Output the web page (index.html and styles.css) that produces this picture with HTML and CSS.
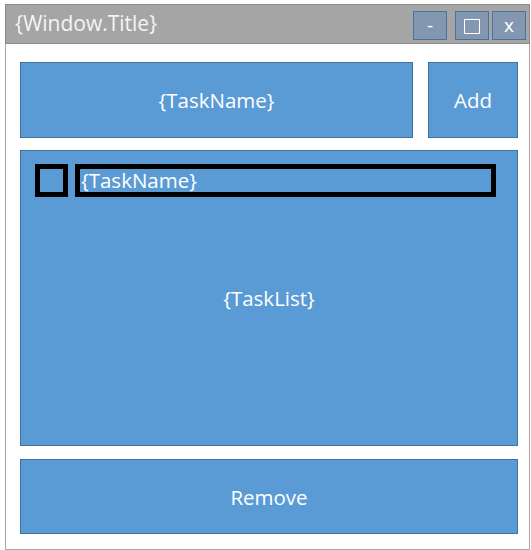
FILE: index.html
```html
<!DOCTYPE html>
<html>
<head>
<meta charset="utf-8">
<link rel="stylesheet" href="styles.css">
</head>
<body>
<div class="window">
  <div class="titlebar">
    <span class="title">{Window.Title}</span>
    <div class="controls">
      <div class="ctl ctl-min">-</div>
      <div class="ctl ctl-max"><span class="maxbox"></span></div>
      <div class="ctl ctl-close">x</div>
    </div>
  </div>
  <div class="content">
    <div class="toprow">
      <div class="box taskname">{TaskName}</div>
      <div class="box add">Add</div>
    </div>
    <div class="box tasklist">
      <div class="item">
        <div class="check"></div>
        <div class="itemtext">{TaskName}</div>
      </div>
      <div class="listlabel">{TaskList}</div>
    </div>
    <div class="box remove">Remove</div>
  </div>
</div>
</body>
</html>
```
FILE: styles.css
```css
* { box-sizing: border-box; }
html, body { margin: 0; padding: 0; background: #ffffff; }
body {
  font-family: "Open Sans", "Noto Sans", sans-serif;
  color: #ffffff;
}
.window {
  margin: 4px 0 0 5px;
  width: 525px;
  height: 546px;
  display: flex;
  flex-direction: column;
}
.titlebar {
  height: 40px;
  background: #a5a5a5;
  border: 1px solid #8a8a8a;
  display: flex;
  align-items: flex-start;
  justify-content: space-between;
}
.title {
  font-size: 21px;
  line-height: 37px;
  padding-left: 9px;
  color: #f4f4f4;
}
.controls {
  display: flex;
  margin-top: 6px;
  margin-right: 3px;
}
.ctl {
  width: 34px;
  height: 29px;
  background: #8497b0;
  border: 1px solid #4a72a0;
  color: #ffffff;
  font-size: 19px;
  line-height: 25px;
  text-align: center;
  display: flex;
  align-items: center;
  justify-content: center;
}
.ctl-min { margin-right: 8px; }
.ctl-max { margin-right: 3px; }
.maxbox {
  width: 16px;
  height: 15px;
  border: 1.5px solid #ffffff;
  margin-top: 2px;
}
.content {
  flex: 1;
  border: 1px solid #a6a6a6;
  border-top: none;
  padding: 18px 11px 15px 14px;
  display: flex;
  flex-direction: column;
  gap: 12px;
}
.box {
  background: #5b9bd5;
  border: 1px solid #41719c;
  color: #ffffff;
  font-size: 20.5px;
  display: flex;
  align-items: center;
  justify-content: center;
}
.toprow {
  display: flex;
  gap: 15px;
  height: 76px;
}
.taskname { flex: 1; }
.add { width: 90px; }
.tasklist {
  height: 296px;
  position: relative;
}
.remove {
  height: 75px;
  margin-top: 1px;
}
.item {
  position: absolute;
  left: 14px;
  top: 13px;
  display: flex;
  gap: 7px;
}
.check {
  width: 33px;
  height: 33px;
  border: 5px solid #000000;
}
.itemtext {
  width: 421px;
  height: 33px;
  border: 5px solid #000000;
  font-size: 20.5px;
  line-height: 22px;
  padding-left: 1px;
}
```
